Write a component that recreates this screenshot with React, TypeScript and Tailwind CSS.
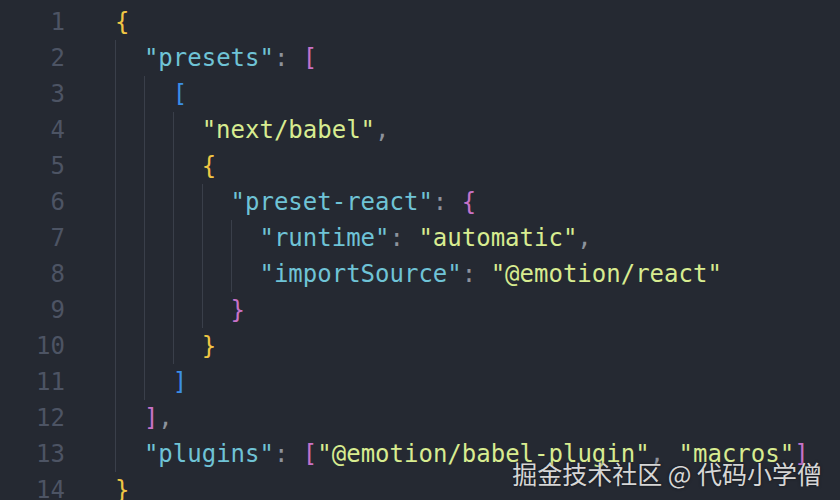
type Tok = { t: string; c: string };

const K = 'text-[#6fc3d6]';
const S = 'text-[#d8ec90]';
const P = 'text-[#8d929c]';
const GOLD = 'text-[#f0c644]';
const PURP = 'text-[#c772c8]';
const BLUE = 'text-[#3b8ee6]';

const k = (t: string): Tok => ({ t, c: K });
const s = (t: string): Tok => ({ t, c: S });
const p = (t: string): Tok => ({ t, c: P });

const LINES: { indent: number; toks: Tok[] }[] = [
  { indent: 0, toks: [{ t: '{', c: GOLD }] },
  { indent: 1, toks: [k('"presets"'), p(': '), { t: '[', c: PURP }] },
  { indent: 2, toks: [{ t: '[', c: BLUE }] },
  { indent: 3, toks: [s('"next/babel"'), p(',')] },
  { indent: 3, toks: [{ t: '{', c: GOLD }] },
  { indent: 4, toks: [k('"preset-react"'), p(': '), { t: '{', c: PURP }] },
  { indent: 5, toks: [k('"runtime"'), p(': '), s('"automatic"'), p(',')] },
  { indent: 5, toks: [k('"importSource"'), p(': '), s('"@emotion/react"')] },
  { indent: 4, toks: [{ t: '}', c: PURP }] },
  { indent: 3, toks: [{ t: '}', c: GOLD }] },
  { indent: 2, toks: [{ t: ']', c: BLUE }] },
  { indent: 1, toks: [{ t: ']', c: PURP }, p(',')] },
  {
    indent: 1,
    toks: [
      k('"plugins"'),
      p(': '),
      { t: '[', c: PURP },
      s('"@emotion/babel-plugin"'),
      p(', '),
      s('"macros"'),
      { t: ']', c: PURP },
    ],
  },
  { indent: 0, toks: [{ t: '}', c: GOLD }] },
];

export default function App() {
  return (
    <div className="relative w-[840px] h-[500px] overflow-hidden bg-[#252932]">
      {/* editor body */}
      <div className="flex pt-[4px] font-['DejaVu_Sans_Mono',monospace] text-[24px] leading-[36px] whitespace-pre">
        {/* gutter */}
        <div className="w-[65px] text-right text-[#4d5464]">
          {LINES.map((_, i) => (
            <div key={i}>{i + 1}</div>
          ))}
        </div>

        {/* code */}
        <div className="pl-[50px]">
          {LINES.map((line, i) => (
            <div key={i} className="flex">
              {Array.from({ length: line.indent }).map((_, j) => (
                <span key={j} className="w-[2ch] border-l border-[#3a3f4a]" />
              ))}
              {line.toks.map((tok, j) => (
                <span key={j} className={tok.c}>
                  {tok.t}
                </span>
              ))}
            </div>
          ))}
        </div>
      </div>

      {/* watermark */}
      <div className="absolute right-[18px] bottom-[14px] font-['Noto_Sans_CJK_SC',sans-serif] text-[25px] leading-none text-[#d6d6d6] [text-shadow:0_0_3px_rgba(0,0,0,0.55)]">
        掘金技术社区 @ 代码小学僧
      </div>
    </div>
  );
}
